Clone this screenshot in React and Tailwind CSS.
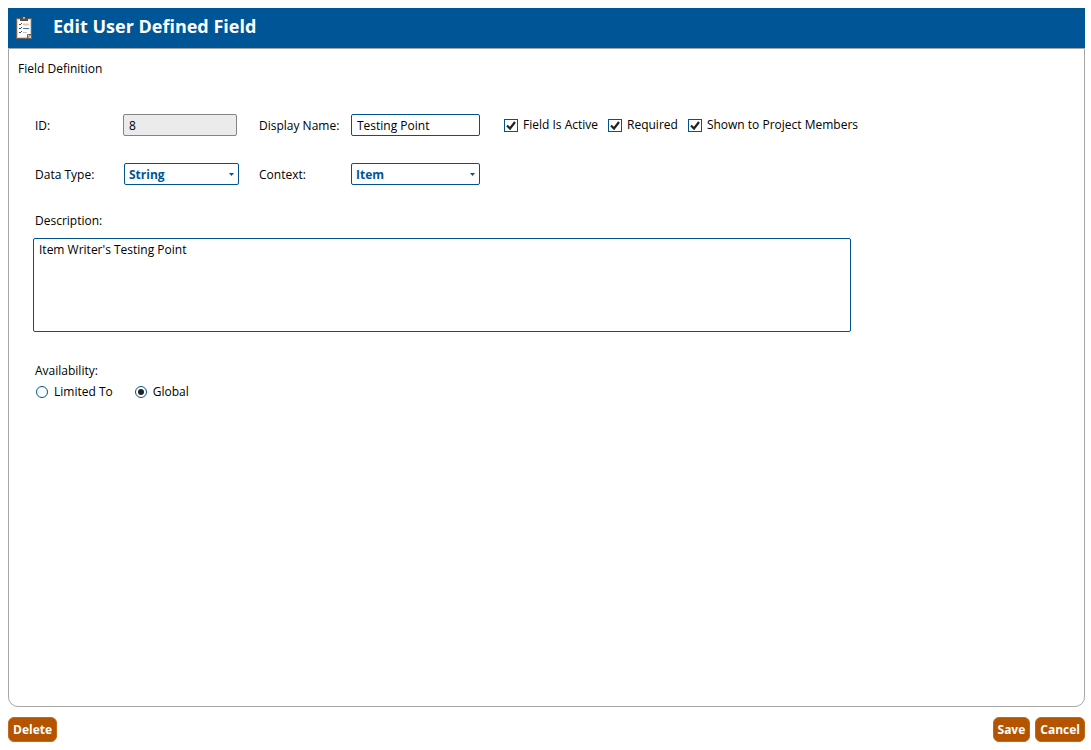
import { useState } from 'react';

// clipboard icon in the title bar
function ClipboardIcon() {
  return (
    <svg width="16" height="24" viewBox="0 0 16 24" aria-hidden="true">
      <rect x="0.500" y="2.500" width="15" height="20" fill="#fff" stroke="#6b6259" />
      <rect x="1.500" y="3.500" width="13" height="18" fill="none" stroke="#d5d5d5" />
      <path d="M4 5V2h2V0.500h4V2h2v3z" fill="#55504c" />
      <path d="M7 1.500h2v1H7z" fill="#fff" />
      <path d="M3 8l1 1 2-2M3 12l1 1 2-2M3 16l1 1 2-2" fill="none" stroke="#4d4d4f" />
      <path d="M7 8.500h6" stroke="#f3c9a5" strokeWidth="2" />
      <path d="M7 12.500h6" stroke="#3b78b5" />
      <path d="M7 16.500h4" stroke="#c4c4c4" />
      <path d="M11.500 22v-3.500H15z" fill="#e6e6e6" stroke="#6b6259" />
    </svg>
  );
}

function Select({ id, value, options, onChange }) {
  return (
    <div className="relative">
      <select
        id={id}
        value={value}
        onChange={(e) => onChange(e.target.value)}
        className="block h-[22px] w-full appearance-none rounded-xs border border-[#00538f] bg-white pt-px pr-4 pl-1 font-bold text-[#005596]"
      >
        {options.map((option) => (
          <option key={option}>{option}</option>
        ))}
      </select>
      <svg
        className="pointer-events-none absolute top-[10px] right-[5px]"
        width="5"
        height="3"
        viewBox="0 0 5 3"
        aria-hidden="true"
      >
        <path d="M0 0h5L2.500 3z" fill="#005596" />
      </svg>
    </div>
  );
}

function CheckBox({ label, checked, onChange }) {
  return (
    <label className="flex items-center gap-[5px] whitespace-nowrap">
      <span className="relative block h-[13px] w-[14px]">
        <input
          type="checkbox"
          checked={checked}
          onChange={(e) => onChange(e.target.checked)}
          className="block h-[13px] w-[14px] appearance-none border border-[#00538f] bg-white"
        />
        {checked && (
          <svg
            className="pointer-events-none absolute inset-0"
            width="14"
            height="13"
            viewBox="0 0 14 13"
            aria-hidden="true"
          >
            <path d="M3 6.500l3 3L11 3" fill="none" stroke="#222" strokeWidth="2.200" />
          </svg>
        )}
      </span>
      {label}
    </label>
  );
}

function Radio({ label, name, checked, onChange }) {
  return (
    <label className="flex items-center gap-[6px]">
      <span className="relative block size-3">
        <input
          type="radio"
          name={name}
          checked={checked}
          onChange={onChange}
          className="block size-3 appearance-none rounded-full border border-[#00538f] bg-white"
        />
        {checked && (
          <span className="pointer-events-none absolute inset-[3px] rounded-full bg-[#222]" />
        )}
      </span>
      {label}
    </label>
  );
}

function Button({ children }) {
  return (
    <button
      type="button"
      className="h-[25px] rounded-md border border-[#c4691c] bg-[#b45300] px-1 text-xs font-bold text-white"
    >
      {children}
    </button>
  );
}

export default function App() {
  const [displayName, setDisplayName] = useState('Testing Point');
  const [dataType, setDataType] = useState('String');
  const [context, setContext] = useState('Item');
  const [description, setDescription] = useState("Item Writer's Testing Point");
  const [active, setActive] = useState(true);
  const [required, setRequired] = useState(true);
  const [shown, setShown] = useState(true);
  const [availability, setAvailability] = useState('global');

  return (
    <div className="flex min-h-screen flex-col bg-white py-2 pr-[6px] pl-2 font-['Open_Sans','Noto_Sans',sans-serif] text-xs text-black">
      {/* title bar */}
      <header className="flex h-10 items-center gap-[21px] bg-[#005596] px-2">
        <ClipboardIcon />
        <h1 className="pb-1 text-lg leading-6 font-bold text-white">Edit User Defined Field</h1>
      </header>

      <main className="flex-1 rounded-b-[10px] border border-[#a6a6a6] px-[9px] pt-3 pb-6">
        <h2>Field Definition</h2>

        <form className="mt-[37px] ml-[15px] max-w-[818px]">
          <div className="grid grid-cols-[88px_136px_92px_129px_1fr] items-center gap-y-[27px] pl-[2px]">
            <label htmlFor="field-id" className="pt-[2px]">
              ID:
            </label>
            <input
              id="field-id"
              value="8"
              readOnly
              className="h-[22px] w-[114px] rounded-xs border border-[#838383] bg-[#ebebeb] px-[5px]"
            />
            <label htmlFor="display-name" className="pt-[2px] whitespace-nowrap">
              Display Name:
            </label>
            <input
              id="display-name"
              value={displayName}
              onChange={(e) => setDisplayName(e.target.value)}
              className="h-[22px] w-full rounded-xs border border-[#00538f] px-[5px]"
            />
            <div className="flex gap-[10px] pl-6">
              <CheckBox label="Field Is Active" checked={active} onChange={setActive} />
              <CheckBox label="Required" checked={required} onChange={setRequired} />
              <CheckBox label="Shown to Project Members" checked={shown} onChange={setShown} />
            </div>

            <label htmlFor="data-type" className="pt-[2px]">
              Data Type:
            </label>
            <div className="pr-5 pl-px">
              <Select
                id="data-type"
                value={dataType}
                options={['String', 'Number', 'Date']}
                onChange={setDataType}
              />
            </div>
            <label htmlFor="context" className="pt-[2px]">
              Context:
            </label>
            <Select
              id="context"
              value={context}
              options={['Item', 'Project']}
              onChange={setContext}
            />
          </div>

          <label htmlFor="description" className="mt-7 block pl-[2px]">
            Description:
          </label>
          <textarea
            id="description"
            value={description}
            onChange={(e) => setDescription(e.target.value)}
            className="mt-[9px] block h-[94px] w-full resize-none rounded-xs border border-[#00538f] px-[5px] py-[3px]"
          />

          <fieldset className="mt-[31px] pl-[2px]">
            <legend>Availability:</legend>
            <div className="mt-[5px] flex gap-[22px] pl-px">
              <Radio
                label="Limited To"
                name="availability"
                checked={availability === 'limited'}
                onChange={() => setAvailability('limited')}
              />
              <Radio
                label="Global"
                name="availability"
                checked={availability === 'global'}
                onChange={() => setAvailability('global')}
              />
            </div>
          </fieldset>
        </form>
      </main>

      <footer className="mt-[10px] flex gap-[5px]">
        <Button>Delete</Button>
        <div className="ml-auto flex gap-[5px]">
          <Button>Save</Button>
          <Button>Cancel</Button>
        </div>
      </footer>
    </div>
  );
}
